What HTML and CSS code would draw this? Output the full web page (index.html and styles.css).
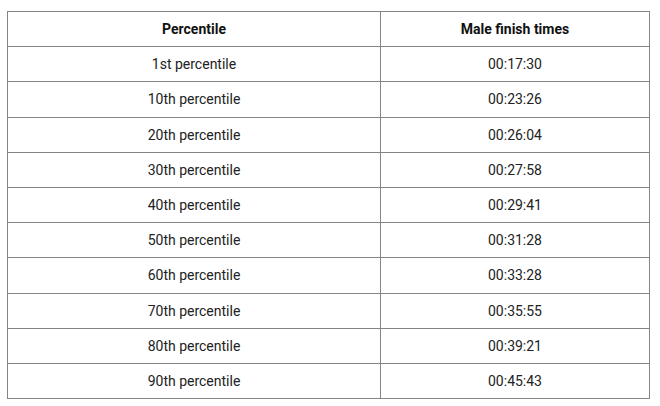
FILE: index.html
```html
<!DOCTYPE html>
<html>
<head>
<meta charset="utf-8">
<link rel="stylesheet" href="styles.css">
</head>
<body>
<table class="times">
  <thead>
    <tr><th class="col-a">Percentile</th><th class="col-b">Male finish times</th></tr>
  </thead>
  <tbody>
    <tr><td>1st percentile</td><td>00:17:30</td></tr>
    <tr><td>10th percentile</td><td>00:23:26</td></tr>
    <tr><td>20th percentile</td><td>00:26:04</td></tr>
    <tr><td>30th percentile</td><td>00:27:58</td></tr>
    <tr><td>40th percentile</td><td>00:29:41</td></tr>
    <tr><td>50th percentile</td><td>00:31:28</td></tr>
    <tr><td>60th percentile</td><td>00:33:28</td></tr>
    <tr><td>70th percentile</td><td>00:35:55</td></tr>
    <tr><td>80th percentile</td><td>00:39:21</td></tr>
    <tr><td>90th percentile</td><td>00:45:43</td></tr>
  </tbody>
</table>
</body>
</html>
```
FILE: styles.css
```css
html, body {
  margin: 0;
  padding: 0;
  background: #fff;
}
body {
  padding: 11px 0 0 7px;
  font-family: Roboto, "Liberation Sans", sans-serif;
  font-size: 14px;
  color: #222;
}
.times {
  border-collapse: collapse;
  width: 642px;
  table-layout: fixed;
}
.times th, .times td {
  border: 1px solid #858585;
  text-align: center;
  vertical-align: middle;
  height: 35.2px;
  padding: 0 8px;
  box-sizing: border-box;
}
.times th {
  font-weight: 700;
  color: #111;
}
.col-a { width: 373px; }
.col-b { width: 269px; }
```
